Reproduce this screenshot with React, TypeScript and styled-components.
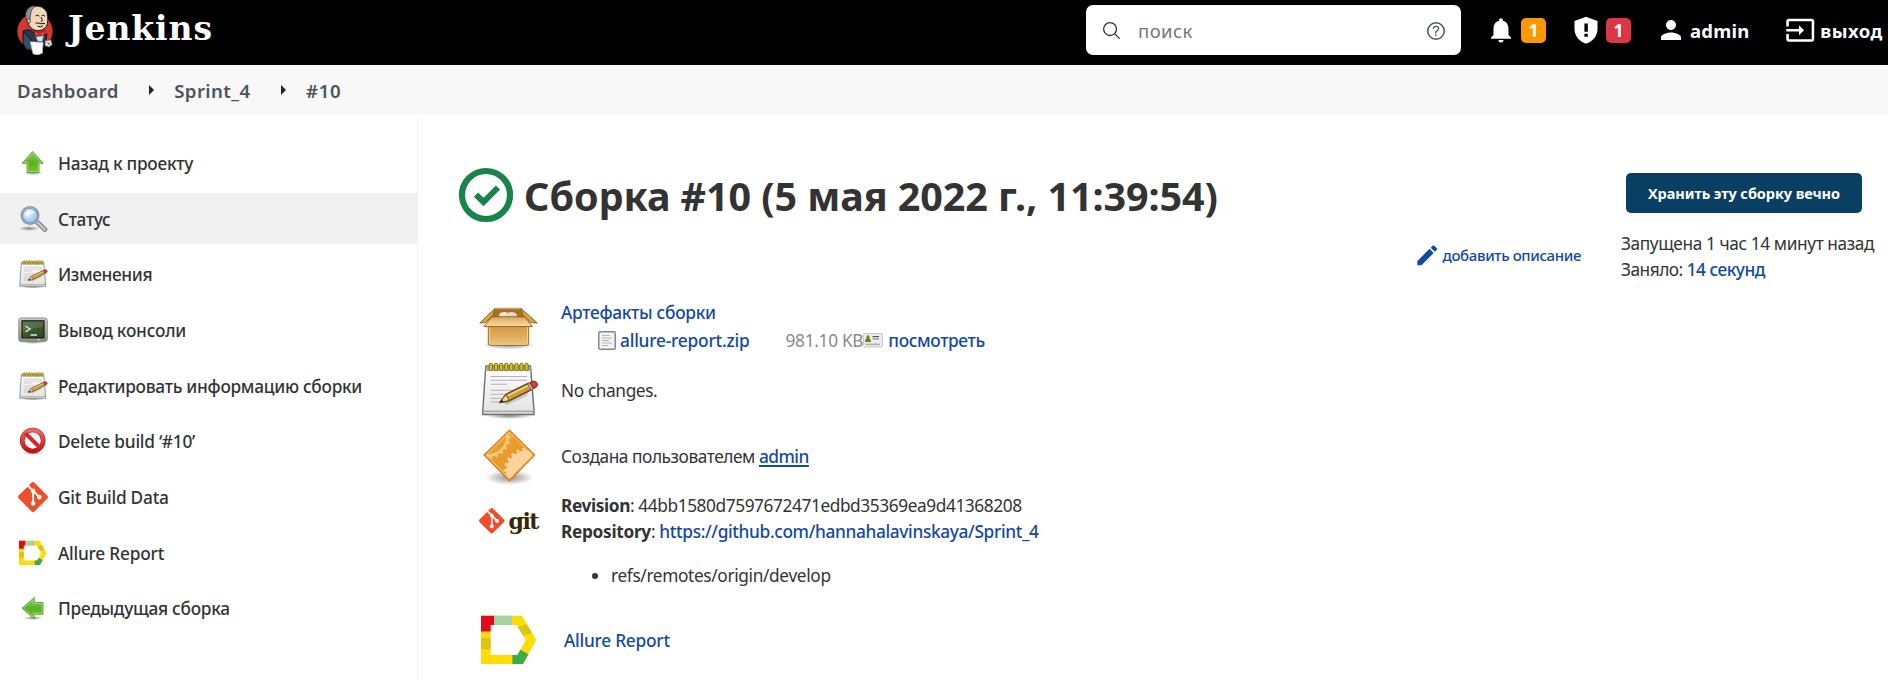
import React from 'react';
import styled, { createGlobalStyle, css } from 'styled-components';
import { IoSearchOutline, IoHelpCircleOutline } from 'react-icons/io5';
import { MdNotifications, MdPerson, MdInput, MdEdit } from 'react-icons/md';
import { SiGit } from 'react-icons/si';

const GlobalStyle = createGlobalStyle`
  * { box-sizing: border-box; }
  body {
    margin: 0;
    background: #fff;
    color: #333;
    font-family: "Noto Sans", "Open Sans", sans-serif;
    font-size: 17.3px;
    overflow: hidden;
  }
  svg { display: block; flex: none; }
`;

/* ---------- layout ---------- */

const Page = styled.div`
  display: flex;
  flex-direction: column;
  width: 1888px;
  height: 680px;
  overflow: hidden;
`;

const Header = styled.header`
  display: flex;
  height: 65px;
  padding: 0 0 0 17px;
  background: #000;
  color: #fff;
`;

const Brand = styled.a`
  display: flex;
  align-items: flex-start;
  gap: 15px;
  padding-top: 5px;
`;

const BrandName = styled.span`
  font: 700 33px/46px "DejaVu Serif", serif;
  letter-spacing: 0.9px;
  margin-top: 1px;
`;

const SearchBox = styled.div`
  display: flex;
  align-items: center;
  width: 375px;
  height: 50px;
  margin: 5px 0 0 auto;
  padding: 0 13.5px 0 15px;
  border-radius: 7px;
  background: #fff;
  color: #333;
`;

const SearchHint = styled.span`
  flex: 1;
  margin-left: 16px;
  padding-top: 2px;
  color: #757575;
  font-size: 18.5px;
  line-height: 24px;
  letter-spacing: 0.45px;
`;

const HelpIcon = styled(IoHelpCircleOutline)`
  color: #4d545d;
  margin-top: 1px;
`;

const Actions = styled.nav`
  display: flex;
  align-items: center;
  width: 427px;
  height: 60px;
  padding-left: 25px;
`;

const Action = styled.a<{ $before?: number; $gap: number; $track?: number }>`
  display: flex;
  align-items: center;
  gap: ${(p) => p.$gap}px;
  margin-left: ${(p) => p.$before ?? 0}px;
  font-size: 18.5px;
  line-height: 26px;
  font-weight: 700;
  letter-spacing: ${(p) => p.$track ?? 0}px;
  white-space: nowrap;
`;

const ActionLabel = styled.span`
  padding-top: 1px;
`;

const Badge = styled.span<{ $tone: string }>`
  width: 25px;
  height: 25px;
  border-radius: 5px;
  background: ${(p) => p.$tone};
  font-size: 17.5px;
  line-height: 25px;
  text-align: center;
  margin-top: 1px;
`;

const Breadcrumbs = styled.div`
  display: flex;
  align-items: center;
  height: 50px;
  padding-left: 17px;
  background: #f8f8f8;
`;

const Crumb = styled.a<{ $track: number }>`
  color: #4d545d;
  font-size: 18.6px;
  line-height: 26px;
  font-weight: 650;
  letter-spacing: ${(p) => p.$track}px;
  padding-top: 1px;
`;

const CrumbArrow = styled.i`
  margin: 0 20px 0 30.5px;
  border: solid transparent;
  border-width: 5px 0 5px 5px;
  border-left-color: #222;
`;

const Body = styled.div`
  display: flex;
  flex: 1;
`;

const Sidebar = styled.aside`
  display: flex;
  flex-direction: column;
  gap: 4.65px;
  width: 418px;
  padding-top: 22.6px;
  border-right: 1px solid #f0f0f0;
`;

const Task = styled.a<{ $active?: boolean; $track: number }>`
  display: flex;
  align-items: center;
  flex: none;
  height: 51px;
  padding-left: 18px;
  gap: 10px;
  background: ${(p) => (p.$active ? '#f1f1f1' : 'transparent')};
  font-weight: 500;
  letter-spacing: ${(p) => p.$track}px;
  white-space: nowrap;
`;

const TaskLabel = styled.span`
  padding-top: 1px;
`;

const Content = styled.main`
  display: flex;
  padding: 53px 0 0 40px;
`;

const Main = styled.section`
  width: 1123px;
`;

const Aside = styled.aside`
  margin-left: 40px;
  padding-top: 5px;
  line-height: 26px;
  white-space: nowrap;
`;

const Heading = styled.h1`
  display: flex;
  align-items: center;
  gap: 10px;
  height: 54px;
  margin: 0;
  font-size: 39.5px;
  line-height: 54px;
  font-weight: 700;
  letter-spacing: -0.08px;
  white-space: nowrap;
`;

const HeadingText = styled.span`
  padding-top: 2px;
`;

const link = css`
  color: #1249a3;
  font-weight: 500;
`;

const Text = styled.span<{ $track?: number; $muted?: boolean }>`
  font-weight: 370;
  letter-spacing: ${(p) => p.$track ?? -0.4}px;
  ${(p) => p.$muted && 'color: #8a8a8a;'}
`;

const Strong = styled.b<{ $track: number }>`
  letter-spacing: ${(p) => p.$track}px;
`;

const Link = styled.a<{ $track?: number; $underline?: boolean }>`
  ${link}
  letter-spacing: ${(p) => p.$track ?? -0.25}px;
  ${(p) => p.$underline && 'text-decoration: underline; text-decoration-thickness: 1.5px; text-underline-offset: 2px;'}
`;

const DescriptionLink = styled.a`
  ${link}
  display: flex;
  align-items: center;
  justify-content: flex-end;
  gap: 2px;
  height: 26px;
  margin-top: 20px;
  font-size: 15px;
  letter-spacing: -0.37px;
`;

const KeepButton = styled.button`
  display: block;
  width: 236px;
  height: 40px;
  margin: 0 0 18px 5px;
  padding: 0;
  border: 0;
  border-radius: 5px;
  background: #083f62;
  color: #fff;
  font: 700 14.5px/41px "Noto Sans", sans-serif;
  letter-spacing: -0.08px;
`;

const Summary = styled.div`
  margin-top: 29px;
  padding-left: 21px;
`;

const Entry = styled.div<{ $height: number; $line: number }>`
  display: grid;
  grid-template-columns: 60px 1fr;
  column-gap: 22px;
  align-items: center;
  height: ${(p) => p.$height}px;
  line-height: ${(p) => p.$line}px;
  white-space: nowrap;
`;

const EntryIcon = styled.div<{ $rise?: number }>`
  display: flex;
  align-items: center;
  margin-bottom: ${(p) => p.$rise ?? 0}px;
`;

const EntryBody = styled.div<{ $indent?: number; $drop?: number }>`
  padding-left: ${(p) => p.$indent ?? 0}px;
  padding-top: ${(p) => p.$drop ?? 1}px;
`;

const Artifact = styled.div`
  display: flex;
  align-items: center;
  padding-left: 37px;
`;

const ArtifactName = styled(Link)`
  margin: 0 36px 0 4px;
`;

const ViewLink = styled(Link)`
  margin-left: 5px;
`;

const Refs = styled.ul`
  margin: 18px 0 18px;
  padding-left: 50px;
`;

const GitWord = styled.span`
  margin-left: 4px;
  color: #362701;
  font: 700 22px/26px "DejaVu Serif", serif;
  letter-spacing: -1.5px;
`;

/* ---------- drawings ---------- */

const Butler = () => (
  <svg width="36" height="51" viewBox="50 14 108 152">
    <circle cx="104" cy="92" r="53" fill="#d33833" />
    <path d="M68 92 Q88 82 100 96 L118 112 L140 100 Q138 126 128 142 L88 148 Q72 130 68 92Z" fill="#25394a" stroke="#0d161d" strokeWidth="3" />
    <path d="M70 94 Q62 128 78 146 L96 150 L96 126 L86 110Z" fill="#335061" stroke="#0d161d" strokeWidth="3" />
    <path d="M82 62 Q74 28 98 18 Q128 12 140 36 Q146 62 138 78 Q126 94 106 90 Q86 84 82 62Z" fill="#f0d6b7" stroke="#0d161d" strokeWidth="3" />
    <path d="M80 64 Q68 34 88 20 Q98 14 108 16 Q90 24 90 48 L88 66Z" fill="#8d9092" stroke="#2a2a2a" strokeWidth="2" />
    <path d="M80 56 Q88 50 90 62 Q88 72 82 66Z" fill="#f0d6b7" stroke="#0d161d" strokeWidth="2" />
    <path d="M106 46 Q112 42 117 47 M124 46 Q130 42 134 47 M122 50 Q130 60 122 64 M106 68 Q116 66 122 70 Q128 66 134 70 M112 77 Q120 82 128 76" fill="none" stroke="#0d161d" strokeWidth="3" />
    <path d="M102 90 L116 98 L134 90 L132 108 L118 102 L104 108Z" fill="#ef3d3a" stroke="#6d0f0c" strokeWidth="2" />
    <path d="M106 108 L130 106 L126 124 L112 122Z" fill="#dbe0e4" stroke="#49728b" strokeWidth="2" />
    <path d="M90 124 L128 126 L126 158 Q110 166 98 160Z" fill="#fff" stroke="#b9bec2" strokeWidth="2" />
    <path d="M134 120 L152 118 L156 132 L146 140 L134 136Z" fill="#e8e8e8" stroke="#333" strokeWidth="2" />
    <path d="M140 125 L148 131 M142 134 L150 126" stroke="#333" strokeWidth="2" />
  </svg>
);

const Shield = () => (
  <svg width="24" height="28" viewBox="0 0 24 28">
    <path d="M12 .8 L23.5 5 V13 C23.5 20 18.5 25.5 12 27.8 C5.500 25.500 .5 20 .5 13 V5Z" fill="#fff" />
    <path d="M10.400 7.500 h3.400 v8.200 h-3.400z M10.400 17.800 h3.400 v3 h-3.400z" fill="#000" />
  </svg>
);

const Defs = () => (
  <svg width="0" height="0">
    <defs>
      <linearGradient id="green" x1="0" y1="0" x2="0" y2="1">
        <stop offset="0" stopColor="#8fc860" />
        <stop offset=".55" stopColor="#5cb022" />
        <stop offset="1" stopColor="#6fd01c" />
      </linearGradient>
      <linearGradient id="paper" x1="0" y1="0" x2="0" y2="1">
        <stop offset="0" stopColor="#fff" />
        <stop offset="1" stopColor="#e2e2e2" />
      </linearGradient>
      <linearGradient id="frame" x1="0" y1="0" x2="0" y2="1">
        <stop offset="0" stopColor="#c9ccc6" />
        <stop offset="1" stopColor="#8b8e88" />
      </linearGradient>
      <linearGradient id="crt" x1="0" y1="0" x2="1" y2="1">
        <stop offset="0" stopColor="#4b6b3a" />
        <stop offset="1" stopColor="#2c4620" />
      </linearGradient>
      <linearGradient id="stop" x1="0" y1="0" x2="0" y2="1">
        <stop offset="0" stopColor="#ee6a6a" />
        <stop offset="1" stopColor="#c41212" />
      </linearGradient>
      <radialGradient id="lens" cx=".4" cy=".35">
        <stop offset="0" stopColor="#eaf4fd" />
        <stop offset="1" stopColor="#a5c9ec" />
      </radialGradient>
      <linearGradient id="carton" x1="0" y1="0" x2="0" y2="1">
        <stop offset="0" stopColor="#cf9336" />
        <stop offset="1" stopColor="#edc07a" />
      </linearGradient>
      <linearGradient id="flap" x1="0" y1="0" x2="0" y2="1">
        <stop offset="0" stopColor="#dda750" />
        <stop offset="1" stopColor="#f8dcae" />
      </linearGradient>
      <linearGradient id="amber" x1="0" y1="0" x2="1" y2="1">
        <stop offset="0" stopColor="#eda234" />
        <stop offset="1" stopColor="#e29427" />
      </linearGradient>
      <radialGradient id="shade">
        <stop offset="0" stopColor="#000" stopOpacity=".45" />
        <stop offset="1" stopColor="#000" stopOpacity="0" />
      </radialGradient>
      <clipPath id="rhomb"><path d="M30.500 5 L53.700 28 L30.500 52 L7 28Z" /></clipPath>
    </defs>
  </svg>
);

const UpArrow = () => (
  <svg width="30" height="30" viewBox="0 0 30 30">
    <ellipse cx="15" cy="25" rx="10" ry="2" fill="url(#shade)" />
    <path d="M14.700 3.400 L25.300 15.300 H21 V24.500 H9 V15.300 H4Z" fill="url(#green)" stroke="#5a9a35" strokeWidth=".8" />
    <path d="M14.700 5 L23 14.400 H20 V23.500 H10 V14.400 H6.200Z" fill="none" stroke="#a5d97c" strokeWidth=".8" />
  </svg>
);

const LeftArrow = () => (
  <svg width="30" height="30" viewBox="0 0 30 30">
    <ellipse cx="15" cy="25" rx="10" ry="2" fill="url(#shade)" />
    <path d="M4 15.300 L16.300 4.400 V9.500 H25 V21.300 H16.300 V26Z" fill="url(#green)" stroke="#5a9a35" strokeWidth=".8" />
    <path d="M5.600 15.300 L15.300 6.600 V10.500 H24 V20.300 H15.300 V24Z" fill="none" stroke="#a5d97c" strokeWidth=".8" />
  </svg>
);

const Magnifier = () => (
  <svg width="30" height="30" viewBox="0 0 30 30">
    <ellipse cx="11" cy="24.500" rx="11" ry="2.600" fill="url(#shade)" />
    <path d="M19.500 18.500 L27 25.500" stroke="#777" strokeWidth="4.600" strokeLinecap="round" />
    <path d="M19.500 18.500 L27 25.500" stroke="#c4c4c4" strokeWidth="2.600" strokeLinecap="round" />
    <circle cx="12" cy="11.500" r="8.800" fill="url(#lens)" stroke="#8f9499" strokeWidth="1.400" />
    <circle cx="12" cy="11.500" r="7.200" fill="none" stroke="#6f9fd2" strokeWidth="1.100" />
    <path d="M6.500 11 Q8 6 13 6.500 Q17 7 17 9 Q12 9 10 13Z" fill="#fff" opacity=".6" />
  </svg>
);

const Notepad = ({ size }: { size: number }) => (
  <svg width={size} height={size} viewBox="0 0 60 60">
    <ellipse cx="30" cy="56" rx="24" ry="3" fill="url(#shade)" />
    <path d="M6.800 6 H51.500 L55 50 V54.500 H3.800 V50Z" fill="url(#paper)" stroke="#6c6c6a" strokeWidth="1.400" strokeLinejoin="round" />
    <path d="M4.500 51.300 H54.500" stroke="#aaa" strokeWidth="1.800" />
    <path d="M6.800 6.500 H51.500 L52 11 H6.500Z" fill="#a8a895" />
    {Array.from({ length: 8 }, (_, i) => (
      <rect key={i} x={10.300 + i * 5.100} y="3.300" width="3.200" height="7.400" rx="1.500" fill="#d6c52c" stroke="#7b6f0a" strokeWidth="1" />
    ))}
    <path d="M11.500 16.500 H48 M11.500 20.300 H48 M11.500 24.200 H28 M11.500 30.300 H48 M11.500 34.200 H44 M11.500 38.200 H36 M11.500 42 H30" stroke="#b4b4b4" strokeWidth="1.100" />
    <path d="M24 43 L50 31 L48 36 L28 45Z" fill="#000" opacity=".16" />
    <path d="M20.700 42.600 L27 34.300 L49.500 23.200 L53 29.400 L30.500 40.600Z" fill="#cf9a3d" stroke="#5f430f" strokeWidth="1.300" strokeLinejoin="round" />
    <path d="M28 36 L50.500 25" stroke="#f0cf85" strokeWidth="1.600" />
    <path d="M20.700 42.600 L27 34.300 L30.500 40.600Z" fill="#ecd19b" stroke="#5f430f" strokeWidth="1" />
    <path d="M20.700 42.600 L23 39.600 L24.300 41.800Z" fill="#222" />
    <path d="M48.600 23.700 L51 22.500 L54.500 28.700 L52.100 29.900Z" fill="#b9b9b9" stroke="#555" strokeWidth=".8" />
    <path d="M51 22.500 L54.500 21 Q58.500 21.500 58.500 25 Q58.300 27.300 54.500 28.700Z" fill="#e2392f" stroke="#8d1d17" strokeWidth="1" />
  </svg>
);

const Terminal = () => (
  <svg width="30" height="30" viewBox="0 0 30 30">
    <ellipse cx="15" cy="27" rx="13" ry="2" fill="url(#shade)" />
    <rect x=".7" y="2.900" width="28.600" height="23.600" rx="2.600" fill="url(#frame)" stroke="#7d807a" strokeWidth=".8" />
    <rect x="4" y="5.800" width="22" height="17" fill="url(#crt)" stroke="#141e10" strokeWidth="1.200" />
    <path d="M4.600 6.400 H25.400 V12 Q14 13 4.600 17Z" fill="#fff" opacity=".12" />
    <path d="M7.500 11 L12 14 L7.500 17" fill="none" stroke="#d8f0c8" strokeWidth="1.500" />
    <path d="M12.500 20 H19" stroke="#d8f0c8" strokeWidth="1.500" />
    <circle cx="20.500" cy="24.700" r=".8" fill="#fff" />
  </svg>
);

const NoEntry = () => (
  <svg width="30" height="30" viewBox="0 0 30 30">
    <ellipse cx="15" cy="27" rx="11" ry="2" fill="url(#shade)" />
    <circle cx="14.700" cy="14.500" r="10.500" fill="#fbf4f4" stroke="#a81212" strokeWidth="4.600" />
    <circle cx="14.700" cy="14.500" r="10.500" fill="none" stroke="url(#stop)" strokeWidth="3.600" />
    <path d="M7.500 7.300 L22 21.700" stroke="#d22727" strokeWidth="4" />
  </svg>
);

const AllureLogo = ({ size }: { size: number }) => (
  <svg width={size} height={size} viewBox="0 0 60 60">
    <path fillRule="evenodd" fill="#ffdc05" d="M2 5.700 H43 L57.200 30 L44 54 H2Z M11.600 15 V45 H38.400 L46.800 30 L37.600 15Z" />
    <path fill="#e3081b" d="M2 5.700 H15 V15 H11.600 V21.500 H2Z" />
    <path fill="#a3d3a2" d="M15 5.700 H33 V15 H15Z" />
    <path fill="#dcc411" d="M38.800 17 L47.800 13.900 L53 23 L44 25.500Z M2 28 H11.600 V39.300 H2Z" />
    <path fill="#3cac47" d="M33.400 45 H38.400 L41.300 39.800 L49.400 44.200 L44 54 H33.400Z" />
  </svg>
);

const SuccessMark = () => (
  <svg width="56" height="56" viewBox="0 0 56 56">
    <circle cx="28" cy="28" r="24" fill="none" stroke="#18834a" strokeWidth="6.200" />
    <path d="M18 27.600 L25.500 35 L40 20.500" fill="none" stroke="#18834a" strokeWidth="6" />
  </svg>
);

const OpenBox = () => (
  <svg width="60" height="50" viewBox="0 0 60 50">
    <ellipse cx="30" cy="44" rx="27" ry="4.500" fill="url(#shade)" />
    <path d="M16 7.500 H42 L47.500 17 H11.500Z" fill="#a8701f" stroke="#9a6a22" />
    <ellipse cx="25" cy="14" rx="5" ry="3" fill="#e9e7e2" />
    <ellipse cx="32.500" cy="14" rx="5.500" ry="3" fill="#dcd9d2" />
    <path d="M16 7.500 L.8 22 L6.500 21.500 L14 14Z" fill="#dba34b" stroke="#94641d" />
    <path d="M42 7.500 L58.300 22 L52 21.500 L44 14Z" fill="#dba34b" stroke="#94641d" />
    <rect x="9.300" y="22" width="40.400" height="22.300" rx="2" fill="url(#carton)" stroke="#94641d" />
    <rect x="10.400" y="23" width="38.200" height="20.200" rx="1.500" fill="none" stroke="#f3d49c" strokeWidth=".9" />
    <path d="M12.700 15.800 H46 L53.300 25.600 H5Z" fill="url(#flap)" stroke="#94641d" />
    <path d="M16 7.500 H42" stroke="#c9a066" strokeWidth="1.500" />
  </svg>
);

const GearSign = () => (
  <svg width="60" height="60" viewBox="0 0 60 60">
    <ellipse cx="30.500" cy="50.500" rx="24" ry="7.500" fill="url(#shade)" />
    <path d="M30.500 3.200 L55.500 28 L30.500 53.800 L5.200 28Z" fill="url(#amber)" stroke="#dd7f1d" strokeWidth="1.400" />
    <g clipPath="url(#rhomb)">
      <circle cx="9" cy="9" r="19.500" fill="none" stroke="#f6c67a" strokeWidth="2.600" />
      <circle cx="9" cy="9" r="21.500" fill="none" stroke="#f6c67a" strokeWidth="2.600" strokeDasharray="2.600 3.200" />
      <circle cx="49" cy="45" r="22" fill="#fad49a" />
      <circle cx="49" cy="45" r="23" fill="none" stroke="#fad49a" strokeWidth="3" strokeDasharray="2.800 3.200" />
    </g>
    <path d="M30.500 5.200 L53.500 28 L30.500 51.700 L7.200 28Z" fill="none" stroke="#fbcf8c" strokeWidth="1" />
  </svg>
);

const FileIcon = () => (
  <svg width="18" height="19" viewBox="0 0 18 19">
    <rect x=".8" y=".8" width="16.400" height="17.400" rx="1.200" fill="#f4f4f4" stroke="#85878a" strokeWidth="1.500" />
    <path d="M4 4.500 H12 M4 7 H14 M4 9.500 H11 M4 12 H14 M4 14.500 H10" stroke="#b5b5b5" strokeWidth="1" />
  </svg>
);

const CardIcon = () => (
  <svg width="20" height="15" viewBox="0 0 20 15">
    <rect x=".5" y=".5" width="19" height="13.600" rx="1.500" fill="#ececec" stroke="#c9c9c9" />
    <path d="M2 9 Q2 6 3.500 5.500 Q3.200 2.300 5 2.300 Q6.800 2.300 6.500 5.500 Q8 6 8 9Z" fill="#80741c" />
    <path d="M9.500 3.600 H16" stroke="#555" strokeWidth="1.200" />
    <path d="M9.500 6 H16 M2.500 11.300 H17" stroke="#b0b4b8" strokeWidth="1.800" />
  </svg>
);

/* ---------- data ---------- */

const tasks = [
  { label: 'Назад к проекту', icon: <UpArrow />, track: -0.24 },
  { label: 'Статус', icon: <Magnifier />, track: -0.35, active: true },
  { label: 'Изменения', icon: <Notepad size={30} />, track: -0.38 },
  { label: 'Вывод консоли', icon: <Terminal />, track: -0.22 },
  { label: 'Редактировать информацию сборки', icon: <Notepad size={30} />, track: -0.28 },
  { label: 'Delete build ‘#10’', icon: <NoEntry />, track: -0.26 },
  { label: 'Git Build Data', icon: <SiGit size={30} color="#f04e2b" />, track: -0.24 },
  { label: 'Allure Report', icon: <AllureLogo size={30} />, track: -0.22 },
  { label: 'Предыдущая сборка', icon: <LeftArrow />, track: -0.28 },
];

export default function App() {
  return (
    <Page>
      <GlobalStyle />
      <Header>
        <Brand>
          <Butler />
          <BrandName>Jenkins</BrandName>
        </Brand>
        <SearchBox>
          <IoSearchOutline size={21} />
          <SearchHint>поиск</SearchHint>
          <HelpIcon size={24} />
        </SearchBox>
        <Actions>
          <Action $gap={5}>
            <MdNotifications size={30} />
            <Badge $tone="#ff9800">1</Badge>
          </Action>
          <Action $before={28} $gap={8}>
            <Shield />
            <Badge $tone="#dc3545">1</Badge>
          </Action>
          <Action $before={24.500} $gap={4.500} $track={0.25}>
            <MdPerson size={30} />
            <ActionLabel>admin</ActionLabel>
          </Action>
          <Action $before={35} $gap={5} $track={0.5}>
            <MdInput size={30.500} />
            <ActionLabel>выход</ActionLabel>
          </Action>
        </Actions>
      </Header>
      <Breadcrumbs>
        <Crumb $track={0.32}>Dashboard</Crumb>
        <CrumbArrow />
        <Crumb $track={0.4}>Sprint_4</Crumb>
        <CrumbArrow />
        <Crumb $track={0.6}>#10</Crumb>
      </Breadcrumbs>
      <Body>
        <Sidebar>
          {tasks.map((t) => (
            <Task key={t.label} $active={t.active} $track={t.track}>
              {t.icon}
              <TaskLabel>{t.label}</TaskLabel>
            </Task>
          ))}
        </Sidebar>
        <Content>
          <Main>
            <Heading>
              <SuccessMark />
              <HeadingText>Сборка #10 (5 мая 2022 г., 11:39:54)</HeadingText>
            </Heading>
            <DescriptionLink>
              <MdEdit size={26.500} />
              <span>добавить описание</span>
            </DescriptionLink>
            <Summary>
              <Entry $height={58} $line={28}>
                <EntryIcon>
                  <OpenBox />
                </EntryIcon>
                <EntryBody>
                  <Link $track={-0.28}>Артефакты сборки</Link>
                  <Artifact>
                    <FileIcon />
                    <ArtifactName $track={-0.2}>allure-report.zip</ArtifactName>
                    <Text $muted $track={-0.3}>981.10 KB</Text>
                    <CardIcon />
                    <ViewLink $track={-0.35}>посмотреть</ViewLink>
                  </Artifact>
                </EntryBody>
              </Entry>
              <Entry $height={69} $line={28}>
                <EntryIcon>
                  <Notepad size={60} />
                </EntryIcon>
                <EntryBody $drop={3}>
                  <Text>No changes.</Text>
                </EntryBody>
              </Entry>
              <Entry $height={65} $line={28}>
                <EntryIcon>
                  <GearSign />
                </EntryIcon>
                <EntryBody>
                  <Text $track={-0.44}>Создана пользователем </Text>
                  <Link $track={-0.5} $underline>admin</Link>
                </EntryBody>
              </Entry>
              <Entry $height={120} $line={26}>
                <EntryIcon $rise={56}>
                  <SiGit size={25.500} color="#f04e2b" />
                  <GitWord>git</GitWord>
                </EntryIcon>
                <EntryBody>
                  <Strong $track={-0.4}>Revision</Strong>
                  <Text $track={-0.42}>: 44bb1580d7597672471edbd35369ea9d41368208</Text>
                  <br />
                  <Strong $track={-0.32}>Repository</Strong>
                  <Text>: </Text>
                  <Link $track={-0.35}>https://github.com/hannahalavinskaya/Sprint_4</Link>
                  <Refs>
                    <li>
                      <Text $track={-0.36}>refs/remotes/origin/develop</Text>
                    </li>
                  </Refs>
                </EntryBody>
              </Entry>
              <Entry $height={61} $line={28}>
                <EntryIcon>
                  <AllureLogo size={60} />
                </EntryIcon>
                <EntryBody $indent={3} $drop={2}>
                  <Link $track={-0.24}>Allure Report</Link>
                </EntryBody>
              </Entry>
            </Summary>
          </Main>
          <Aside>
            <KeepButton>Хранить эту сборку вечно</KeepButton>
            <Text>Запущена 1 час 14 минут назад</Text>
            <br />
            <Text $track={-0.5}>Заняло: </Text>
            <Link $track={-0.5}>14 секунд</Link>
          </Aside>
        </Content>
      </Body>
      <Defs />
    </Page>
  );
}
